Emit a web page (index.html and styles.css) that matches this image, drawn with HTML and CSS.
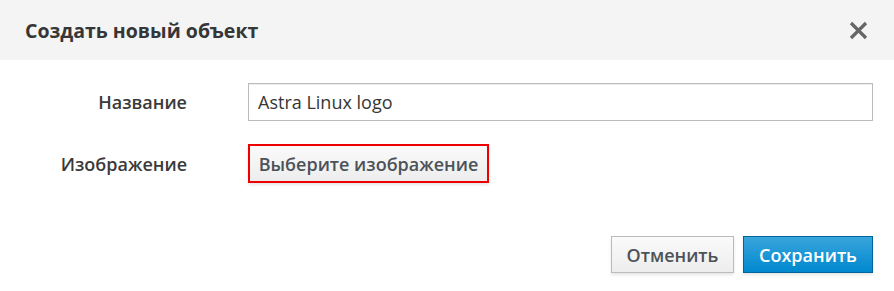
FILE: index.html
```html
<!DOCTYPE html>
<html lang="ru">
<head>
  <meta charset="UTF-8" />
  <title>Создать новый объект</title>
  <link rel="stylesheet" href="styles.css">
</head>
<body>
  <div class="modal">
    <div class="modal-header">
      <h4>Создать новый объект</h4>
      <button class="close" type="button" aria-label="Закрыть">
        <svg width="19" height="19" viewBox="0 0 19 19">
          <path d="M2 2 L17 17 M17 2 L2 17" stroke="#666" stroke-width="3.2" stroke-linecap="butt"/>
        </svg>
      </button>
    </div>

    <form class="modal-body">
      <div class="form-row">
        <label>Название</label>
        <input type="text" value="Astra Linux logo">
      </div>
      <div class="form-row">
        <label>Изображение</label>
        <button type="button" class="btn btn-pick">Выберите изображение</button>
      </div>
    </form>

    <div class="modal-footer">
      <button type="button" class="btn btn-default">Отменить</button>
      <button type="button" class="btn btn-primary">Сохранить</button>
    </div>
  </div>
</body>
</html>
```

FILE: styles.css
```css
body {
  margin: 0;
  font-family: 'Open Sans', 'Noto Sans', sans-serif;
  background: #fff;
  color: #363636;
}

.modal {
  width: 894px;
  height: 291px;
}

.modal-header {
  display: flex;
  align-items: center;
  justify-content: space-between;
  height: 60px;
  padding: 0 25px;
  background: #f4f4f4;
}

.modal-header h4 {
  margin: 0;
  font-size: 19.5px;
  font-weight: 700;
  color: #363636;
}

.close {
  display: flex;
  padding: 0;
  margin-right: 1px;
  border: none;
  background: none;
  cursor: pointer;
}

.modal-body {
  padding: 23px 21px 0 0;
}

.form-row {
  display: grid;
  grid-template-columns: 187px 1fr;
  column-gap: 61px;
  align-items: center;
  margin-bottom: 23px;
}

.form-row label {
  text-align: right;
  font-size: 18px;
  font-weight: 600;
  color: #3a3a3a;
}

.form-row input {
  height: 38px;
  box-sizing: border-box;
  padding: 0 9px;
  border: 1px solid #bbb;
  box-shadow: inset 0 1px 1px rgba(3, 3, 3, 0.075);
  font-family: inherit;
  font-size: 18px;
  color: #363636;
}

.btn {
  box-sizing: border-box;
  height: 38px;
  font-family: inherit;
  font-size: 18px;
  font-weight: 600;
  cursor: pointer;
  box-shadow: 0 2px 3px rgba(3, 3, 3, 0.1);
}

.btn-pick {
  justify-self: start;
  width: 241px;
  height: 39px;
  padding: 0;
  border: 2px solid #ee0000;
  background: linear-gradient(#fafafa, #ededed);
  color: #4d5258;
}

.modal-footer {
  display: flex;
  justify-content: flex-end;
  gap: 9px;
  padding: 30px 21px 0 0;
}

.btn-default {
  width: 123px;
  height: 37px;
  padding: 0;
  border: 1px solid #bbb;
  background: linear-gradient(#fafafa, #ededed);
  color: #4d5258;
}

.btn-primary {
  width: 130px;
  height: 37px;
  padding: 0;
  border: 1px solid #00659c;
  background: linear-gradient(#39a5dc, #0088ce);
  color: #fff;
}
```
